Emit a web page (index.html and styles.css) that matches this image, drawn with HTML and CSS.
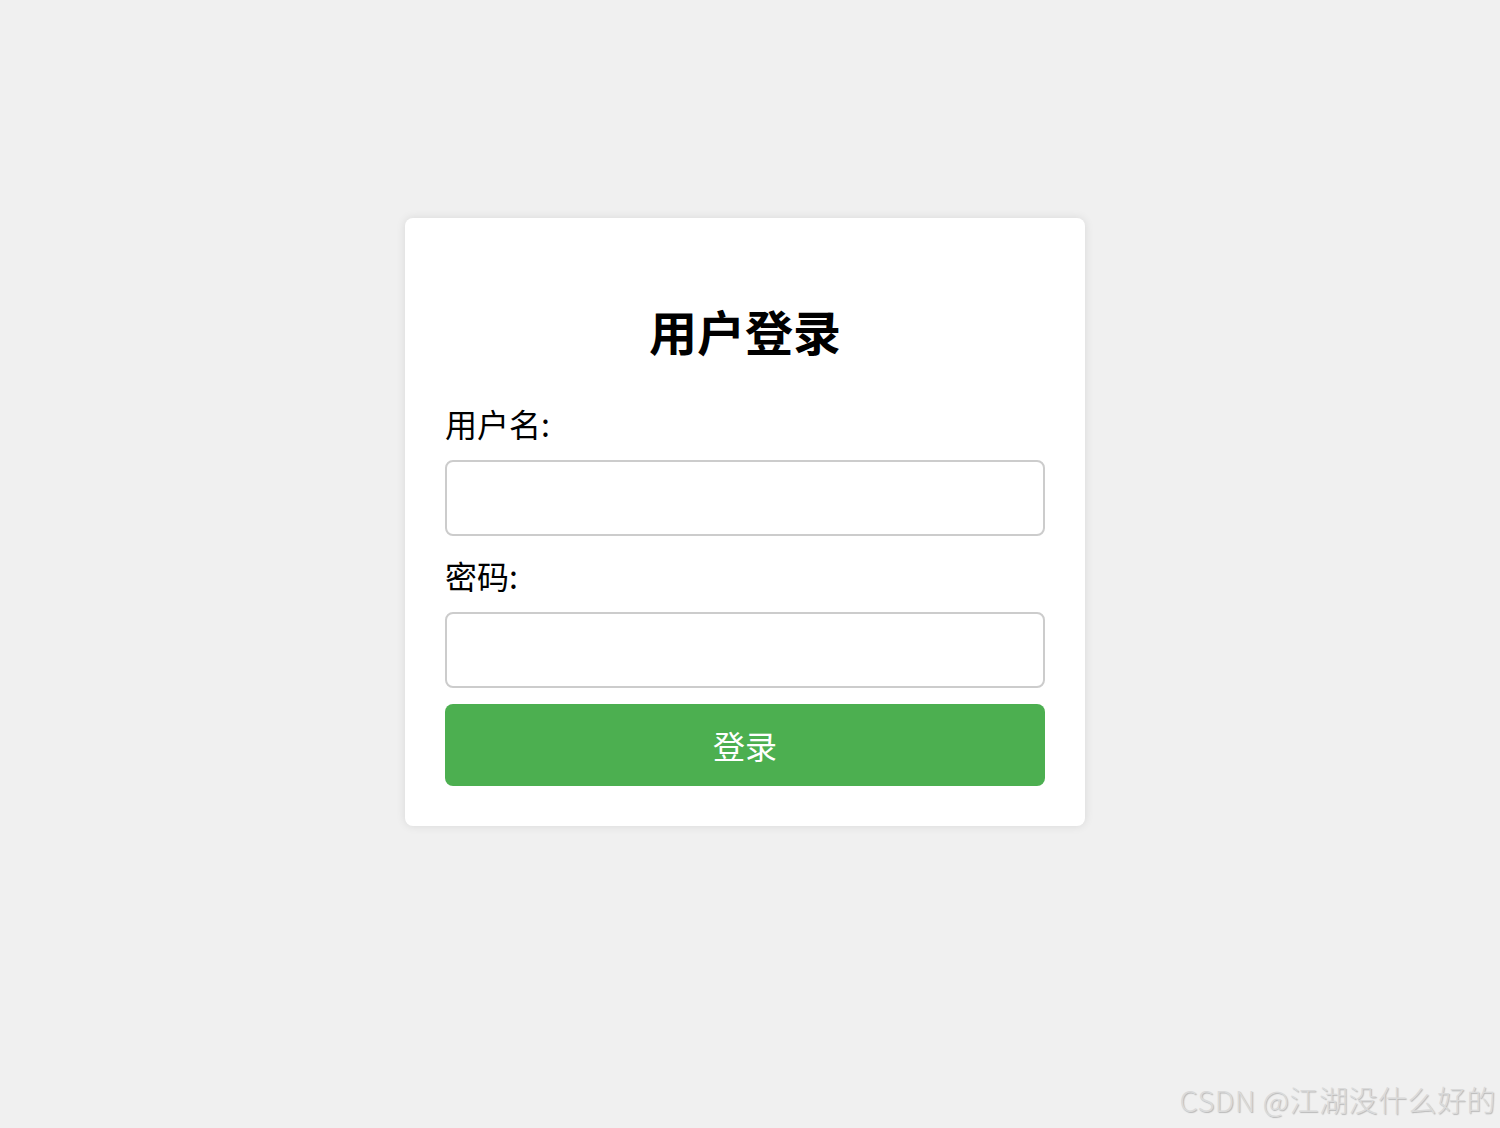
FILE: index.html
```html
<!DOCTYPE html>
<html lang="zh-CN">
<head>
    <meta charset="UTF-8">
    <meta name="viewport" content="width=device-width, initial-scale=1.0">
    <title>用户登录</title>
    <link rel="stylesheet" href="styles.css">
</head>
<body>

    <div class="login-box">
        <h2>用户登录</h2>
        <form>
            <label for="username">用户名:</label>
            <input type="text" id="username" name="username">
            <label for="password">密码:</label>
            <input type="password" id="password" name="password">
            <button type="submit">登录</button>
        </form>
    </div>

    <div class="watermark">CSDN @江湖没什么好的</div>

</body>
</html>
```

FILE: styles.css
```css
body {
    font-family: "Noto Sans CJK SC", "Noto Sans", sans-serif;
    background-color: #f0f0f0;
    margin: 0;
    padding: 218px 10px 0 0;
    height: 1128px;
    box-sizing: border-box;
    display: flex;
    justify-content: center;
    align-items: flex-start;
}
.login-box {
    width: 600px;
    background: #fff;
    padding: 40px;
    border-radius: 8px;
    box-shadow: 0 0 10px rgba(0, 0, 0, 0.1);
}
h2 {
    text-align: center;
    font-size: 48px;
    font-weight: bold;
    line-height: 70px;
    margin: 37px 0 35px;
    color: #000;
}
form {
    display: flex;
    flex-direction: column;
}
label {
    font-size: 32px;
    line-height: 46px;
    color: #000;
}
input {
    height: 76px;
    margin: 14px 0 16px;
    border: 2px solid #ccc;
    border-radius: 8px;
    padding: 0 16px;
    font-size: 32px;
    box-sizing: border-box;
}
button {
    height: 82px;
    border: none;
    border-radius: 8px;
    background: #4caf50;
    color: #fff;
    font-family: inherit;
    font-size: 32px;
    cursor: pointer;
}
.watermark {
    position: absolute;
    right: 4px;
    bottom: 8px;
    font-family: "Noto Sans CJK SC", sans-serif;
    font-size: 29px;
    letter-spacing: 0.5px;
    font-weight: 300;
    color: #dadada;
    text-shadow: 1px 1px 1px #b8b8b8;
}
```
